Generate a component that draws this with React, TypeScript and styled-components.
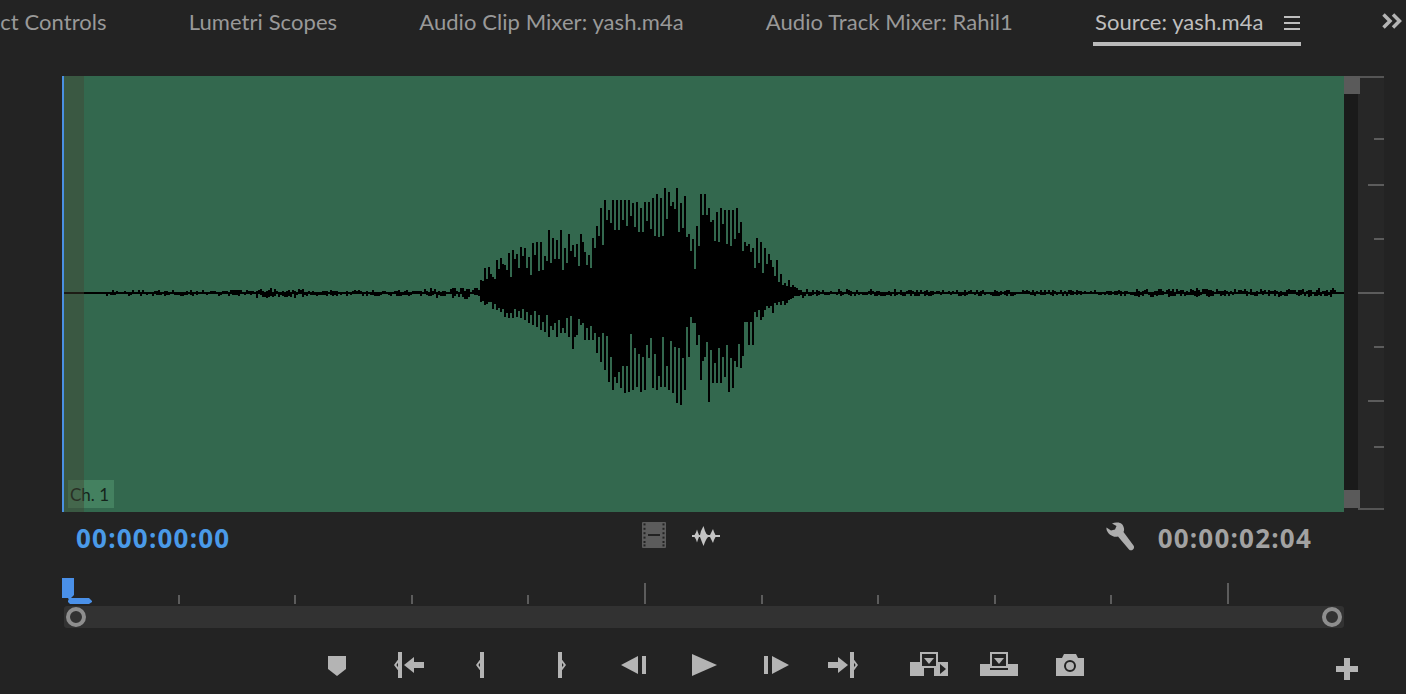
import React from 'react';
import styled, { createGlobalStyle } from 'styled-components';

const TAB_FONT = `Lato, 'Noto Sans', sans-serif`;
const ICON = '#b4b4b4';
const BG = '#232323';

// peak heights per 4px, measured above / below the centre line from x=480
const TOPS = [
  13, 25, 26, 16, 33, 35, 28, 40, 43, 39, 46, 45, 36, 50, 51, 51, 37, 63, 55, 53, 63, 45, 59, 48, 49, 59, 41, 38, 55, 67,
  85, 93, 83, 93, 93, 93, 93, 93, 90, 91, 85, 91, 91, 95, 99, 95, 105, 101, 91, 105, 90, 97, 59, 54, 67, 99, 99, 85, 73,
  81, 85, 83, 83, 83, 85, 71, 51, 49, 45, 55, 51, 45, 39, 26, 33, 19, 10, 13, 8, 5, 3,
];
const BOTS = [
  9, 12, 9, 16, 17, 19, 24, 25, 25, 24, 25, 27, 30, 32, 34, 37, 39, 44, 37, 44, 40, 40, 44, 56, 42, 32, 47, 47, 47, 60,
  69, 77, 89, 97, 90, 95, 100, 99, 97, 94, 99, 97, 65, 95, 97, 94, 94, 97, 100, 110, 112, 97, 64, 30, 52, 87, 64, 109,
  90, 90, 90, 84, 99, 95, 74, 75, 29, 52, 52, 24, 27, 17, 15, 20, 12, 12, 12, 7, 5, 3, 2,
];
const VALLEY_TOP = [
  [480, 8], [500, 14], [540, 18], [590, 24], [600, 40], [620, 56], [685, 56], [688, 14], [696, 14], [700, 40],
  [745, 40], [755, 22], [785, 6], [800, 2],
];
const VALLEY_BOT = [
  [480, 8], [530, 16], [590, 24], [598, 34], [680, 40], [690, 24], [700, 40], [745, 38], [755, 16], [785, 5], [800, 2],
];
const NOISE = [
  [64, 0], [104, 0], [106, 2], [250, 2], [255, 4], [300, 4], [305, 2], [420, 2], [425, 4], [478, 5],
  [800, 5], [815, 3], [1125, 2], [1135, 4], [1205, 4], [1210, 3], [1300, 3], [1310, 4], [1333, 4], [1335, 0], [1344, 0],
];

const interp = (table: number[][], x: number) => {
  for (let i = 1; i < table.length; i++) {
    if (x <= table[i][0]) {
      const [x0, y0] = table[i - 1];
      const [x1, y1] = table[i];
      return y0 + ((y1 - y0) * (x - x0)) / (x1 - x0);
    }
  }
  return 0;
};

const buildWave = () => {
  const mid = 217;
  let seed = 1337;
  const rand = () => {
    seed = (seed * 16807) % 2147483647;
    return seed / 2147483647;
  };
  let d = `M2 ${mid - 1}H1282V${mid + 1}H2Z`;
  const col = (px: number, up: number, down: number) => {
    const x = px - 62;
    d += `M${x} ${mid - Math.round(up)}h2V${mid + Math.round(down)}h-2Z`;
  };
  const noisy = (amp: number) => (amp > 0 ? rand() * (amp + 1) : 0);
  const valley = (body: number, peak: number) => {
    const base = Math.min(body, peak);
    return base + rand() * (peak - base) * 0.8;
  };
  for (let px = 64; px < 480; px += 2) {
    const amp = interp(NOISE, px);
    col(px, noisy(amp), noisy(amp));
  }
  for (let j = 0; j <= 160; j++) {
    const px = 480 + j * 2;
    const i = Math.floor(j / 2);
    if (j % 2 === 0) col(px, TOPS[i], BOTS[i]);
    else col(px, valley(interp(VALLEY_TOP, px), TOPS[i]), valley(interp(VALLEY_BOT, px), BOTS[i]));
  }
  for (let px = 802; px < 1344; px += 2) {
    const amp = interp([[800, 5], ...NOISE.slice(11)], px);
    col(px, noisy(amp), noisy(amp) * 0.9);
  }
  return d;
};

const WAVE_PATH = buildWave();

const TABS = [
  { label: 'Effect Controls' },
  { label: 'Lumetri Scopes' },
  { label: 'Audio Clip Mixer: yash.m4a' },
  { label: 'Audio Track Mixer: Rahil1' },
];

const SCALE_TICKS = [
  { gap: 60, width: 10 },
  { gap: 44, width: 16 },
  { gap: 52, width: 10 },
  { gap: 52, width: 26 },
  { gap: 52, width: 10 },
  { gap: 52, width: 16 },
  { gap: 44, width: 10 },
];

const RULER_TICKS = [1, 2, 3, 4, 5, 6, 7, 8, 9, 10];

const GlobalStyle = createGlobalStyle`
  html, body {
    margin: 0;
    padding: 0;
    background: ${BG};
  }
`;

const Page = styled.div`
  width: 1406px;
  height: 694px;
  overflow: hidden;
  background: ${BG};
  position: relative;
`;

const TabBar = styled.div`
  height: 76px;
  box-sizing: border-box;
  display: flex;
  align-items: flex-start;
  gap: 82px;
  margin-left: -39px;
  padding-top: 7px;
  white-space: nowrap;
`;

const Tab = styled.div`
  font: 400 22px/30px ${TAB_FONT};
  letter-spacing: 0.07px;
  color: #999;
  flex: none;
`;

const ActiveTab = styled(Tab)`
  display: flex;
  align-items: flex-start;
  color: #bebebe;
  height: 35px;
  padding: 0 1px 0 2px;
  margin-left: -2px;
  border-bottom: 4px solid #bababa;
`;

const Hamburger = styled.svg`
  width: 16px;
  height: 14px;
  margin: 9px 0 0 20px;
`;

const Chevrons = styled.svg`
  position: absolute;
  top: 13px;
  left: 1382px;
  width: 20px;
  height: 16px;
`;

const Viewer = styled.div`
  display: flex;
  align-items: flex-start;
  height: 436px;
  padding-left: 62px;
`;

const WaveArea = styled.div`
  position: relative;
  width: 1280px;
  height: 436px;
  box-sizing: content-box;
  border-left: 2px solid #4a90e2;
  background: #33684e;
`;

const WaveSvg = styled.svg`
  display: block;
  margin-left: -2px;
  width: 1282px;
  height: 436px;
`;

const HeadShade = styled.div`
  position: absolute;
  top: 0;
  left: 0;
  width: 20px;
  height: 436px;
  background: rgba(70, 66, 50, 0.42);
`;

const ChannelLabel = styled.div`
  position: absolute;
  left: 4px;
  top: 404px;
  width: 46px;
  height: 28px;
  box-sizing: border-box;
  padding-left: 2px;
  background: rgba(88, 160, 120, 0.45);
  color: #14241b;
  font: 400 17px/30px ${TAB_FONT};
`;

const ScrollTrack = styled.div`
  position: relative;
  width: 14px;
  height: 432px;
  background: #1a1a1a;
`;

const ScrollThumb = styled.div<{ $end: 'top' | 'bottom' }>`
  position: absolute;
  left: 0;
  ${(p) => p.$end}: 0;
  width: 16px;
  height: 18px;
  background: #5a5a5a;
`;

const Scale = styled.div`
  width: 26px;
  height: 434px;
  box-sizing: border-box;
  background: #272727;
  border-top: 2px solid #555;
  border-bottom: 2px solid #555;
  display: flex;
  flex-direction: column;
  align-items: flex-end;
`;

const ScaleTick = styled.div<{ $gap: number; $width: number }>`
  flex: none;
  height: 2px;
  margin-top: ${(p) => p.$gap}px;
  width: ${(p) => p.$width}px;
  background: #5c5c5c;
`;

const TimeRow = styled.div`
  height: 66px;
  box-sizing: border-box;
  padding: 8px 94px 0 76px;
  display: flex;
  align-items: flex-start;
`;

const Timecode = styled.div<{ $color: string }>`
  font: 700 26px/36px 'Open Sans', sans-serif;
  letter-spacing: 1.2px;
  color: ${(p) => p.$color};
  white-space: nowrap;
`;

const CurrentSlot = styled.div`
  width: 566px;
  flex: none;
`;

const FilmIcon = styled.svg`
  width: 24px;
  height: 26px;
  margin-top: 2px;
  flex: none;
`;

const WaveIcon = styled.svg`
  width: 28px;
  height: 20px;
  margin: 6px 0 0 26px;
  flex: none;
`;

const WrenchIcon = styled.svg`
  width: 29px;
  height: 29px;
  margin: 2px 23px 0 auto;
  flex: none;
`;

const Ruler = styled.div`
  position: relative;
  display: flex;
  align-items: flex-end;
  height: 26px;
  margin: 0 0 2px 63px;
`;

const RulerTick = styled.div<{ $tall: boolean }>`
  flex: none;
  box-sizing: border-box;
  width: 116.6px;
  height: ${(p) => (p.$tall ? 21 : 9)}px;
  border-right: 2px solid #5c5c5c;
`;

const PlayheadIcon = styled.svg`
  position: absolute;
  left: -1px;
  top: 0;
  width: 30px;
  height: 26px;
`;

const ZoomBar = styled.div`
  width: 1280px;
  height: 22px;
  margin-left: 64px;
  box-sizing: border-box;
  padding: 0 2px;
  border-radius: 3px;
  background: #323232;
  display: flex;
  align-items: center;
  justify-content: space-between;
`;

const ZoomHandle = styled.div`
  width: 20px;
  height: 20px;
  box-sizing: border-box;
  border-radius: 50%;
  border: 4px solid #8e8e8e;
  background: #323232;
`;

const Transport = styled.div`
  display: flex;
  align-items: center;
  height: 30px;
  margin-top: 22px;
  padding: 0 48px 0 328px;
`;

const TransportIcon = styled.svg<{ $left?: number; $top?: number }>`
  flex: none;
  display: block;
  margin-left: ${(p) => p.$left ?? 0}px;
  margin-top: ${(p) => p.$top ?? 0}px;
  fill: ${ICON};
`;

const PlusIcon = styled(TransportIcon)`
  margin-left: auto;
`;

const Brace = ({ flip }: { flip?: boolean }) => (
  <g transform={flip ? 'matrix(-1 0 0 1 8 0)' : undefined}>
    <rect x="4" width="4" height="26" />
    <path d="M4.5 8.5L1.2 13L4.5 17.5" fill="none" stroke={ICON} strokeWidth="2" />
  </g>
);

const App = () => (
  <Page>
    <GlobalStyle />
    <TabBar>
      {TABS.map((tab) => (
        <Tab key={tab.label}>{tab.label}</Tab>
      ))}
      <ActiveTab>
        Source: yash.m4a
        <Hamburger viewBox="0 0 16 14" fill="#bebebe">
          <rect y="0" width="16" height="2" />
          <rect y="6" width="16" height="2" />
          <rect y="12" width="16" height="2" />
        </Hamburger>
      </ActiveTab>
    </TabBar>
    <Chevrons viewBox="0 0 20 16" fill="none" stroke={ICON} strokeWidth="3.5">
      <path d="M1.5 1.5L8 8L1.5 14.5" />
      <path d="M11 1.5L17.5 8L11 14.5" />
    </Chevrons>

    <Viewer>
      <WaveArea>
        <WaveSvg viewBox="0 0 1282 436" shapeRendering="crispEdges">
          <path d={WAVE_PATH} fill="#000" />
        </WaveSvg>
        <ChannelLabel>Ch. 1</ChannelLabel>
        <HeadShade />
      </WaveArea>
      <ScrollTrack>
        <ScrollThumb $end="top" />
        <ScrollThumb $end="bottom" />
      </ScrollTrack>
      <Scale>
        {SCALE_TICKS.map((tick, i) => (
          <ScaleTick key={i} $gap={tick.gap} $width={tick.width} />
        ))}
      </Scale>
    </Viewer>

    <TimeRow>
      <CurrentSlot>
        <Timecode $color="#4a9ae8">00:00:00:00</Timecode>
      </CurrentSlot>
      <FilmIcon viewBox="0 0 24 26">
        <rect width="24" height="26" rx="1" fill="#5c5c5c" />
        {[2, 6.4, 10.8, 15.2, 19.6, 23].map((y) => (
          <React.Fragment key={y}>
            <rect x="1.5" y={y - 0.6} width="2" height="2" fill={BG} />
            <rect x="20.5" y={y - 0.6} width="2" height="2" fill={BG} />
          </React.Fragment>
        ))}
        <rect x="6" y="12" width="12" height="2" fill={BG} />
      </FilmIcon>
      <WaveIcon viewBox="0 0 28 20" fill="#c4c4c4">
        <path d="M0 9H2.5L4 6.5L5 3.5L6 6.5L7 9H8L9 5L11.5 0L13 5L14.5 8L16 9H18L19.5 6L21 3L22 6L23.5 9H28V11H23.5L22 14L21 17L19.5 14L18 11H16L14.5 13L13 16L11.5 20L9.5 15L8 11H7L6 13.5L5 16.5L4 13.5L2.5 11H0Z" />
      </WaveIcon>
      <WrenchIcon viewBox="0 0 29 29" fill="#adadad">
        <path d="M10.5 0.5C14 0 17.5 2 18 6.5C18.2 8 18 9 17.5 10L27.5 23.5C28.5 25 28 26.5 27 27.5C25.5 28.8 24 28.5 23 27.5L12 14.5C10.5 15 8.5 15 6.5 14C2.5 12.5 0 8.5 0.5 5.5L5 8.5L9 7.5L10.5 4L6 1.5C7.5 0.8 9 0.5 10.5 0.5Z" />
      </WrenchIcon>
      <Timecode $color="#a2a2a2">00:00:02:04</Timecode>
    </TimeRow>

    <Ruler>
      {RULER_TICKS.map((n) => (
        <RulerTick key={n} $tall={n % 5 === 0} />
      ))}
      <PlayheadIcon viewBox="0 0 30 26" fill="#4a90e8">
        <path d="M0 0H12V17L7 22L6 20H0Z" />
        <path d="M6 24V22.5L8 20H27L30 23V24L27 26H8Z" />
      </PlayheadIcon>
    </Ruler>
    <ZoomBar>
      <ZoomHandle />
      <ZoomHandle />
    </ZoomBar>

    <Transport>
      <TransportIcon width="18" height="20" viewBox="0 0 18 20" $top={2}>
        <path d="M0 0H18V13L9 20L0 13Z" />
      </TransportIcon>
      <TransportIcon width="30" height="26" viewBox="0 0 30 26" $left={48}>
        <Brace />
        <path d="M10 13L20 5V10H30V16H20V21Z" />
      </TransportIcon>
      <TransportIcon width="8" height="26" viewBox="0 0 8 26" $left={52}>
        <Brace />
      </TransportIcon>
      <TransportIcon width="8" height="26" viewBox="0 0 8 26" $left={74}>
        <Brace flip />
      </TransportIcon>
      <TransportIcon width="25" height="18" viewBox="0 0 25 18" $left={55}>
        <path d="M0 9L17 0V18Z" />
        <rect x="21" width="4" height="18" />
      </TransportIcon>
      <TransportIcon width="25" height="22" viewBox="0 0 25 22" $left={46}>
        <path d="M0 0L25 11L0 22Z" />
      </TransportIcon>
      <TransportIcon width="25" height="18" viewBox="0 0 25 18" $left={47}>
        <rect width="4" height="18" />
        <path d="M8 0L25 9L8 18Z" />
      </TransportIcon>
      <TransportIcon width="30" height="26" viewBox="0 0 30 26" $left={39}>
        <path d="M20 13L10 5V10H0V16H10V21Z" />
        <g transform="translate(22 0)">
          <Brace flip />
        </g>
      </TransportIcon>
      <TransportIcon width="38" height="24" viewBox="0 0 38 24" $left={52} $top={-2}>
        <path d="M0 10H14V24H0Z" />
        <path d="M24 10H38V24H24Z" />
        <rect x="10" width="18" height="16" />
        <rect x="12" y="2" width="14" height="12" fill={BG} />
        <path d="M14 6H24L19 12Z" />
        <path d="M30 12L36 17L30 22Z" fill={BG} />
        <rect x="14" y="16" width="10" height="8" fill={BG} />
      </TransportIcon>
      <TransportIcon width="38" height="24" viewBox="0 0 38 24" $left={32} $top={-2}>
        <rect y="12" width="38" height="12" />
        <rect x="10" width="18" height="16" />
        <rect x="12" y="2" width="14" height="12" fill={BG} />
        <path d="M14 6H24L19 12Z" />
        <rect x="10" y="16" width="18" height="2" fill={BG} />
      </TransportIcon>
      <TransportIcon width="28" height="22" viewBox="0 0 28 22" $left={38}>
        <path d="M0 4H6L8 0H20L22 4H28V22H0Z" />
        <circle cx="14" cy="12" r="5" fill="none" stroke={BG} strokeWidth="2" />
      </TransportIcon>
      <PlusIcon width="22" height="22" viewBox="0 0 22 22" $top={8}>
        <path d="M8 0H14V8H22V14H14V22H8V14H0V8H8Z" />
      </PlusIcon>
    </Transport>
  </Page>
);

export default App;
